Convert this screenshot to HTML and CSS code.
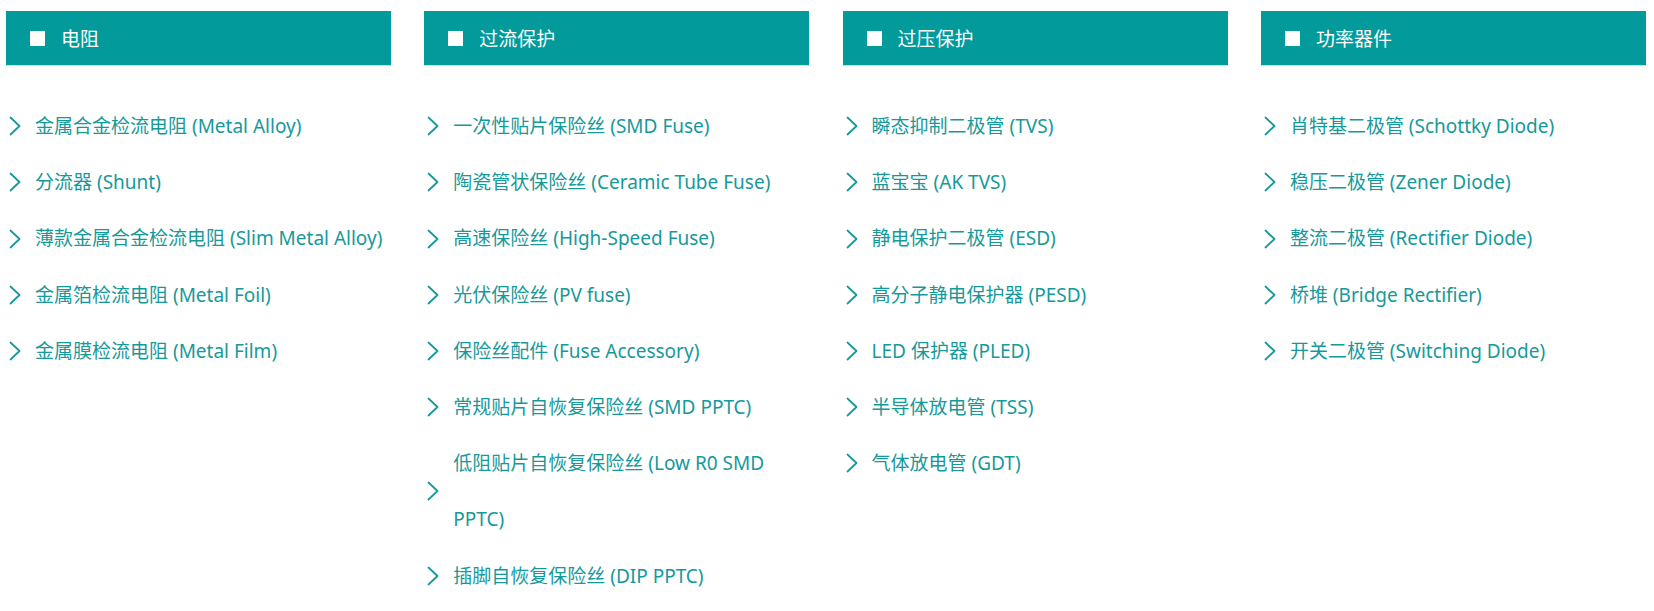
FILE: index.html
```html
<!DOCTYPE html>
<html lang="zh-CN">
<head>
<meta charset="utf-8">
<title>产品分类</title>
<link rel="stylesheet" href="styles.css">
</head>
<body>
<div class="menu">
  <section class="col">
    <h3 class="head"><span class="sq"></span>电阻</h3>
    <ul class="list">
      <li><svg class="chev" viewBox="0 0 12 20"><polyline points="1.5,1.5 10.5,10 1.5,18.5"/></svg><a>金属合金检流电阻 (Metal Alloy)</a></li>
      <li><svg class="chev" viewBox="0 0 12 20"><polyline points="1.5,1.5 10.5,10 1.5,18.5"/></svg><a>分流器 (Shunt)</a></li>
      <li><svg class="chev" viewBox="0 0 12 20"><polyline points="1.5,1.5 10.5,10 1.5,18.5"/></svg><a>薄款金属合金检流电阻 (Slim Metal Alloy)</a></li>
      <li><svg class="chev" viewBox="0 0 12 20"><polyline points="1.5,1.5 10.5,10 1.5,18.5"/></svg><a>金属箔检流电阻 (Metal Foil)</a></li>
      <li><svg class="chev" viewBox="0 0 12 20"><polyline points="1.5,1.5 10.5,10 1.5,18.5"/></svg><a>金属膜检流电阻 (Metal Film)</a></li>
    </ul>
  </section>
  <section class="col">
    <h3 class="head"><span class="sq"></span>过流保护</h3>
    <ul class="list">
      <li><svg class="chev" viewBox="0 0 12 20"><polyline points="1.5,1.5 10.5,10 1.5,18.5"/></svg><a>一次性贴片保险丝 (SMD Fuse)</a></li>
      <li><svg class="chev" viewBox="0 0 12 20"><polyline points="1.5,1.5 10.5,10 1.5,18.5"/></svg><a>陶瓷管状保险丝 (Ceramic Tube Fuse)</a></li>
      <li><svg class="chev" viewBox="0 0 12 20"><polyline points="1.5,1.5 10.5,10 1.5,18.5"/></svg><a>高速保险丝 (High-Speed Fuse)</a></li>
      <li><svg class="chev" viewBox="0 0 12 20"><polyline points="1.5,1.5 10.5,10 1.5,18.5"/></svg><a>光伏保险丝 (PV fuse)</a></li>
      <li><svg class="chev" viewBox="0 0 12 20"><polyline points="1.5,1.5 10.5,10 1.5,18.5"/></svg><a>保险丝配件 (Fuse Accessory)</a></li>
      <li><svg class="chev" viewBox="0 0 12 20"><polyline points="1.5,1.5 10.5,10 1.5,18.5"/></svg><a>常规贴片自恢复保险丝 (SMD PPTC)</a></li>
      <li><svg class="chev" viewBox="0 0 12 20"><polyline points="1.5,1.5 10.5,10 1.5,18.5"/></svg><a>低阻贴片自恢复保险丝 (Low R0 SMD PPTC)</a></li>
      <li><svg class="chev" viewBox="0 0 12 20"><polyline points="1.5,1.5 10.5,10 1.5,18.5"/></svg><a>插脚自恢复保险丝 (DIP PPTC)</a></li>
    </ul>
  </section>
  <section class="col">
    <h3 class="head"><span class="sq"></span>过压保护</h3>
    <ul class="list">
      <li><svg class="chev" viewBox="0 0 12 20"><polyline points="1.5,1.5 10.5,10 1.5,18.5"/></svg><a>瞬态抑制二极管 (TVS)</a></li>
      <li><svg class="chev" viewBox="0 0 12 20"><polyline points="1.5,1.5 10.5,10 1.5,18.5"/></svg><a>蓝宝宝 (AK TVS)</a></li>
      <li><svg class="chev" viewBox="0 0 12 20"><polyline points="1.5,1.5 10.5,10 1.5,18.5"/></svg><a>静电保护二极管 (ESD)</a></li>
      <li><svg class="chev" viewBox="0 0 12 20"><polyline points="1.5,1.5 10.5,10 1.5,18.5"/></svg><a>高分子静电保护器 (PESD)</a></li>
      <li><svg class="chev" viewBox="0 0 12 20"><polyline points="1.5,1.5 10.5,10 1.5,18.5"/></svg><a>LED 保护器 (PLED)</a></li>
      <li><svg class="chev" viewBox="0 0 12 20"><polyline points="1.5,1.5 10.5,10 1.5,18.5"/></svg><a>半导体放电管 (TSS)</a></li>
      <li><svg class="chev" viewBox="0 0 12 20"><polyline points="1.5,1.5 10.5,10 1.5,18.5"/></svg><a>气体放电管 (GDT)</a></li>
    </ul>
  </section>
  <section class="col">
    <h3 class="head"><span class="sq"></span>功率器件</h3>
    <ul class="list">
      <li><svg class="chev" viewBox="0 0 12 20"><polyline points="1.5,1.5 10.5,10 1.5,18.5"/></svg><a>肖特基二极管 (Schottky Diode)</a></li>
      <li><svg class="chev" viewBox="0 0 12 20"><polyline points="1.5,1.5 10.5,10 1.5,18.5"/></svg><a>稳压二极管 (Zener Diode)</a></li>
      <li><svg class="chev" viewBox="0 0 12 20"><polyline points="1.5,1.5 10.5,10 1.5,18.5"/></svg><a>整流二极管 (Rectifier Diode)</a></li>
      <li><svg class="chev" viewBox="0 0 12 20"><polyline points="1.5,1.5 10.5,10 1.5,18.5"/></svg><a>桥堆 (Bridge Rectifier)</a></li>
      <li><svg class="chev" viewBox="0 0 12 20"><polyline points="1.5,1.5 10.5,10 1.5,18.5"/></svg><a>开关二极管 (Switching Diode)</a></li>
    </ul>
  </section>
</div>
</body>
</html>
```

FILE: styles.css
```css
* { box-sizing: border-box; }
html, body { margin: 0; padding: 0; background: #fff; }
body {
  font-family: "Noto Sans", "Noto Sans CJK SC", sans-serif;
  color: #16999a;
}
.menu {
  display: grid;
  grid-template-columns: repeat(4, 385px);
  column-gap: 33.3px;
  padding: 11px 0 0 6px;
}
.head {
  margin: 0;
  height: 54px;
  background: #029a9a;
  color: #fff;
  font-size: 19px;
  font-weight: 400;
  display: flex;
  align-items: center;
  padding-left: 24px;
  box-shadow: 0 1px 0 #bfe4e4;
}
.sq {
  width: 15px;
  height: 15px;
  background: #fff;
  margin-right: 16px;
}
.list {
  list-style: none;
  margin: 33px 0 0;
  padding: 0;
}
.list li {
  display: flex;
  align-items: center;
  padding-left: 3px;
}
.list a {
  font-size: 19px;
  line-height: 56.2px;
  color: #16999a;
  flex: 1;
}
.chev {
  flex: none;
  width: 12px;
  height: 20px;
  margin-right: 14px;
}
.chev polyline {
  fill: none;
  stroke: #16999a;
  stroke-width: 1.8;
  stroke-linecap: round;
  stroke-linejoin: round;
}
```
